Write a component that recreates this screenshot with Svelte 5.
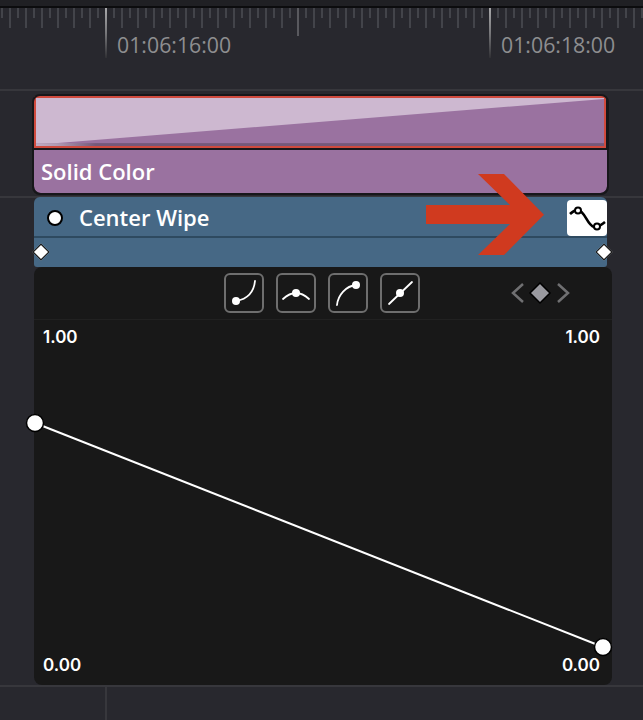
<script>
  const ticks = [];
  for (let x = 2; x < 643; x += 8) {
    const frame = (x - 106) / 8;
    if (frame % 48 === 0) continue;
    let end = frame % 2 === 0 ? 28 : 18;
    if (frame % 24 === 0) end = 36;
    ticks.push({ x, end });
  }
</script>

<div class="page">
  <div class="topbar"></div>

  <div class="ruler">
    <svg class="ticks" width="643" height="62" viewBox="0 8 643 62">
      <defs>
        <linearGradient id="major" x1="0" y1="0" x2="0" y2="1">
          <stop offset="0" stop-color="#a8a8aa" />
          <stop offset="0.5" stop-color="#77777a" />
          <stop offset="1" stop-color="#303034" />
        </linearGradient>
      </defs>
      {#each ticks as t}
        <line x1={t.x} x2={t.x} y1="8" y2={t.end} stroke={t.end === 36 ? "#6a6a6f" : "#4c4e54"} stroke-width="1.5" />
      {/each}
      <rect x="105" y="8" width="2" height="50" fill="url(#major)" />
      <rect x="489" y="8" width="2" height="50" fill="url(#major)" />
    </svg>
    <span class="tc first">01:06:16:00</span>
    <span class="tc second">01:06:18:00</span>
  </div>

  <div class="lane upper">
    <div class="clip-stack">
      <div class="thumb">
        <svg width="568" height="48" viewBox="0 0 570 50" preserveAspectRatio="none">
          <defs>
            <linearGradient id="band" gradientUnits="userSpaceOnUse" x1="0" y1="0" x2="60" y2="0">
              <stop offset="0" stop-color="#c0abc3" />
              <stop offset="0.35" stop-color="#b09bb4" />
              <stop offset="1" stop-color="#75587a" />
            </linearGradient>
          </defs>
          <rect width="570" height="50" fill="#9a72a0" />
          <polygon points="0,0 570,0 570,1 22,47 0,47" fill="#cdb8d0" />
          <rect y="47" width="570" height="3" fill="url(#band)" />
        </svg>
      </div>
      <div class="solid">Solid Color</div>
    </div>
  </div>

  <div class="lane lower">
    <div class="wipe">
      <div class="wipe-head">
        <span class="dot"></span>
        <span class="wipe-name">Center Wipe</span>
        <span class="curve-btn">
          <svg width="40" height="36" viewBox="0 0 40 36">
            <path d="M3 14 C6 11 8 10 11 10 C18 11 20 25 27 27 C31 28 34 25 38 22" fill="none" stroke="#000" stroke-width="2.6" />
            <circle cx="11" cy="10.5" r="3" fill="#fff" stroke="#000" stroke-width="2" />
            <circle cx="30" cy="26.5" r="3" fill="#fff" stroke="#000" stroke-width="2" />
          </svg>
        </span>
      </div>
      <div class="wipe-keys">
        <span class="key"></span>
        <span class="key"></span>
      </div>
    </div>

    <div class="panel">
      <div class="panel-head">
        <div class="ease-btns">
          <span class="ease">
            <svg width="36" height="36" viewBox="2 2 36 36">
              <path d="M12 28 C24 26 30 18 31 8" fill="none" stroke="#fff" stroke-width="1.8" stroke-linecap="round" />
              <circle cx="12" cy="28" r="4" fill="#fff" />
            </svg>
          </span>
          <span class="ease">
            <svg width="36" height="36" viewBox="2 2 36 36">
              <path d="M7 26 Q20 14 33 26" fill="none" stroke="#fff" stroke-width="1.8" stroke-linecap="round" />
              <circle cx="20" cy="20" r="4" fill="#fff" />
            </svg>
          </span>
          <span class="ease">
            <svg width="36" height="36" viewBox="2 2 36 36">
              <path d="M9 32 C10 22 18 13 28 12" fill="none" stroke="#fff" stroke-width="1.8" stroke-linecap="round" />
              <circle cx="28" cy="12" r="4" fill="#fff" />
            </svg>
          </span>
          <span class="ease">
            <svg width="36" height="36" viewBox="2 2 36 36">
              <path d="M9 31 L32 9" fill="none" stroke="#fff" stroke-width="1.8" stroke-linecap="round" />
              <circle cx="20" cy="20" r="4" fill="#fff" />
            </svg>
          </span>
        </div>
        <svg class="nav" width="60" height="24" viewBox="0 0 60 24">
          <path d="M13 3 L3 12 L13 21" fill="none" stroke="#707072" stroke-width="2.5" />
          <path d="M30 2 L40 12 L30 22 L20 12 Z" fill="#9a9aa0" stroke="#000" stroke-width="1.5" />
          <path d="M48 3 L58 12 L48 21" fill="none" stroke="#707072" stroke-width="2.5" />
        </svg>
      </div>

      <div class="graph">
        <div class="values"><span>1.00</span><span>1.00</span></div>
        <div class="values"><span>0.00</span><span>0.00</span></div>
      </div>

      <svg class="curve" width="578" height="418" viewBox="34 267 578 418">
        <line x1="35" y1="423" x2="603" y2="647" stroke="#fff" stroke-width="2" />
        <circle cx="35" cy="423" r="8.5" fill="#fff" stroke="#000" stroke-width="1.5" />
        <circle cx="603" cy="647" r="8.5" fill="#fff" stroke="#000" stroke-width="1.5" />
      </svg>
    </div>
  </div>

  <div class="footer"><span class="footer-line"></span></div>

  <svg class="arrow" width="120" height="83" viewBox="426 173 120 83">
    <polygon points="478,174 504,174 544,214.7 504,255 478,255 510,224 426,224 426,205 510,205" fill="#d03a1f" />
  </svg>
</div>

<style>
  :global(body) {
    margin: 0;
    background: #28282e;
  }

  .page {
    position: relative;
    width: 643px;
    height: 720px;
    overflow: hidden;
    display: flex;
    flex-direction: column;
    background: #28282e;
    font-family: "Open Sans", sans-serif;
  }

  .topbar {
    height: 6px;
    flex: none;
    background: #202024;
    border-bottom: 2px solid #0c0c0e;
  }

  .ruler {
    position: relative;
    height: 81px;
    flex: none;
  }

  .ticks {
    position: absolute;
    top: 0;
    left: 0;
  }

  .tc {
    position: absolute;
    top: 23px;
    font-size: 21.3px;
    line-height: 28px;
    color: #8e8e90;
  }

  .first {
    left: 117px;
  }

  .second {
    left: 501px;
  }

  .lane {
    flex: none;
    padding-left: 34px;
  }

  .upper {
    height: 109px;
    box-sizing: border-box;
    padding-top: 5px;
    border-top: 2px solid #37373c;
    border-bottom: 2px solid #37373c;
  }

  .clip-stack {
    width: 573px;
    display: flex;
    flex-direction: column;
    gap: 2px;
    outline: 2px solid #17171a;
    border-radius: 6px;
    background: #17171a;
  }

  .thumb {
    box-sizing: border-box;
    width: 572px;
    height: 52px;
    border: 2px solid #d04a3e;
    overflow: hidden;
    background: #9a72a0;
  }

  .thumb svg {
    display: block;
    width: 100%;
    height: 100%;
  }

  .solid {
    height: 43px;
    box-sizing: border-box;
    padding-left: 7px;
    background: #9a72a0;
    border-radius: 0 0 7px 7px;
    color: #fff;
    font-weight: 600;
    font-size: 22px;
    line-height: 42px;
  }

  .lower {
    height: 487px;
    box-sizing: border-box;
  }

  .wipe {
    width: 573px;
    height: 70px;
    margin-top: -1px;
    background: #466885;
    border-radius: 6px 6px 3px 3px;
    display: flex;
    flex-direction: column;
  }

  .wipe-head {
    height: 41px;
    flex: none;
    box-sizing: border-box;
    display: flex;
    align-items: center;
    padding: 3px 0 0 13px;
    border-bottom: 2px solid #2e4a60;
  }

  .dot {
    width: 12px;
    height: 12px;
    flex: none;
    background: #fff;
    border: 2px solid #000;
    border-radius: 50%;
  }

  .wipe-name {
    margin: -2px 0 0 16px;
    color: #fff;
    font-weight: 600;
    font-size: 22px;
    line-height: 28px;
  }

  .curve-btn {
    margin-left: auto;
    align-self: flex-start;
    width: 40px;
    height: 36px;
    background: #fff;
    border-radius: 4px;
  }

  .curve-btn svg {
    display: block;
  }

  .wipe-keys {
    flex: 1;
    display: flex;
    align-items: center;
    justify-content: space-between;
    padding: 0 0 2px 0.5px;
    margin-right: -2.5px;
  }

  .key {
    width: 10px;
    height: 10px;
    background: #fff;
    border: 1.5px solid #000;
    transform: rotate(45deg);
  }

  .panel {
    position: relative;
    width: 578px;
    height: 418px;
    background: #181818;
    border-radius: 8px;
    display: flex;
    flex-direction: column;
  }

  .panel-head {
    height: 53px;
    flex: none;
    box-sizing: border-box;
    border-bottom: 1px solid #212121;
    display: flex;
    align-items: center;
    padding: 0 0 0 190px;
  }

  .ease-btns {
    display: flex;
    gap: 12px;
  }

  .ease {
    width: 36px;
    height: 36px;
    border: 2px solid #6e6e6e;
    border-radius: 6px;
  }

  .ease svg {
    display: block;
  }

  .nav {
    margin-left: 90px;
  }

  .graph {
    flex: 1;
    display: flex;
    flex-direction: column;
    justify-content: space-between;
    padding: 6px 12px 9px 9px;
  }

  .values {
    display: flex;
    justify-content: space-between;
    color: #fff;
    font-family: Inter, sans-serif;
    font-weight: 600;
    font-size: 17px;
    line-height: 22px;
  }

  .curve {
    position: absolute;
    top: 0;
    left: 0;
    overflow: visible;
  }

  .footer {
    flex: 1;
    border-top: 2px solid #37373c;
    padding-left: 105px;
  }

  .footer-line {
    display: block;
    width: 2px;
    height: 100%;
    background: #37373c;
  }

  .arrow {
    position: absolute;
    top: 173px;
    left: 426px;
  }
</style>
